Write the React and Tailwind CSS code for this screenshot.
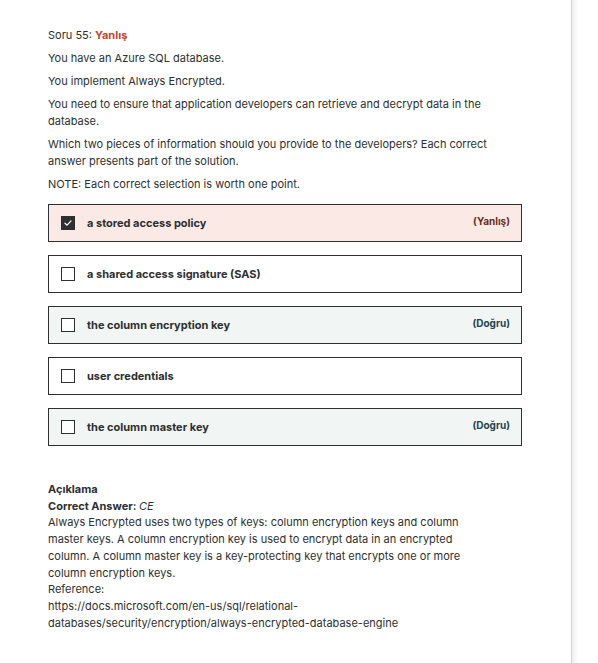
import React from "react";

const options = [
  { text: "a stored access policy", checked: true, status: "wrong" },
  { text: "a shared access signature (SAS)" },
  { text: "the column encryption key", status: "right" },
  { text: "user credentials" },
  { text: "the column master key", status: "right" },
];

function Check() {
  return (
    <svg width="10" height="10" viewBox="0 0 10 10" fill="none">
      <path d="M2 5.2 L4.1 7.2 L8 2.9" stroke="#ffffff" strokeWidth="1.2" strokeLinecap="round" strokeLinejoin="round" />
    </svg>
  );
}

function Option({ o }) {
  const bg =
    o.status === "wrong" ? "bg-[#fbe9e5]" : o.status === "right" ? "bg-[#f1f5f4]" : "bg-white";
  return (
    <div className={`flex items-center h-[38px] border border-[#2d2f31] pl-[12px] pr-[11px] ${bg}`}>
      {o.checked ? (
        <div className="w-[14px] h-[14px] bg-[#2d2f31] flex items-center justify-center shrink-0">
          <Check />
        </div>
      ) : (
        <div className="w-[14px] h-[14px] border border-[#2d2f31] bg-white shrink-0" />
      )}
      <span className="ml-[12px] font-bold text-[11px] text-[#2d2f31] flex-1">{o.text}</span>
      {o.status === "wrong" && (
        <span className="font-bold text-[10px] text-[#6e2a1c] -mt-[4px]">(Yanlış)</span>
      )}
      {o.status === "right" && (
        <span className="font-bold text-[10px] text-[#1d4450] -mt-[4px]">(Doğru)</span>
      )}
    </div>
  );
}

export default function App() {
  return (
    <div
      className="w-[598px] h-[663px] bg-white flex text-[#2d2f31] overflow-hidden"
      style={{ fontFamily: "Inter, 'Liberation Sans', sans-serif" }}
    >
      <div className="w-[571px] shrink-0 pl-[48px] pr-[49px] pt-[27px]">
        <div className="text-[11px] leading-[16px]">
          <p className="mb-[7px]">
            Soru 55: <span className="font-bold text-[#c5452c]">Yanlış</span>
          </p>
          <p className="mb-[7px]">You have an Azure SQL database.</p>
          <p className="mb-[7px]">You implement Always Encrypted.</p>
          <p className="mb-[7px] leading-[16.5px]">
            You need to ensure that application developers can retrieve and decrypt data in the database.
          </p>
          <p className="mb-[7px] leading-[16.5px]">
            Which two pieces of information should you provide to the developers? Each correct answer presents part of the solution.
          </p>
          <p>NOTE: Each correct selection is worth one point.</p>
        </div>
        <div className="mt-[12px] flex flex-col gap-[13px]">
          {options.map((o, i) => (
            <Option key={i} o={o} />
          ))}
        </div>
        <div className="mt-[35px] text-[11px] leading-[16.7px] whitespace-nowrap">
          <div className="font-bold">Açıklama</div>
          <div>
            <span className="font-bold">Correct Answer: </span>
            <span className="italic">CE</span>
          </div>
          <div>
            Always Encrypted uses two types of keys: column encryption keys and column
            <br />
            master keys. A column encryption key is used to encrypt data in an encrypted
            <br />
            column. A column master key is a key-protecting key that encrypts one or more
            <br />
            column encryption keys.
          </div>
          <div>Reference:</div>
          <div>
            https://docs.microsoft.com/en-us/sql/relational-
            <br />
            databases/security/encryption/always-encrypted-database-engine
          </div>
        </div>
      </div>
      <div className="w-[1px] h-full bg-[#d4d4d4] shrink-0" />
      <div className="w-[6px] h-full bg-gradient-to-r from-[#efefef] to-white shrink-0" />
    </div>
  );
}
